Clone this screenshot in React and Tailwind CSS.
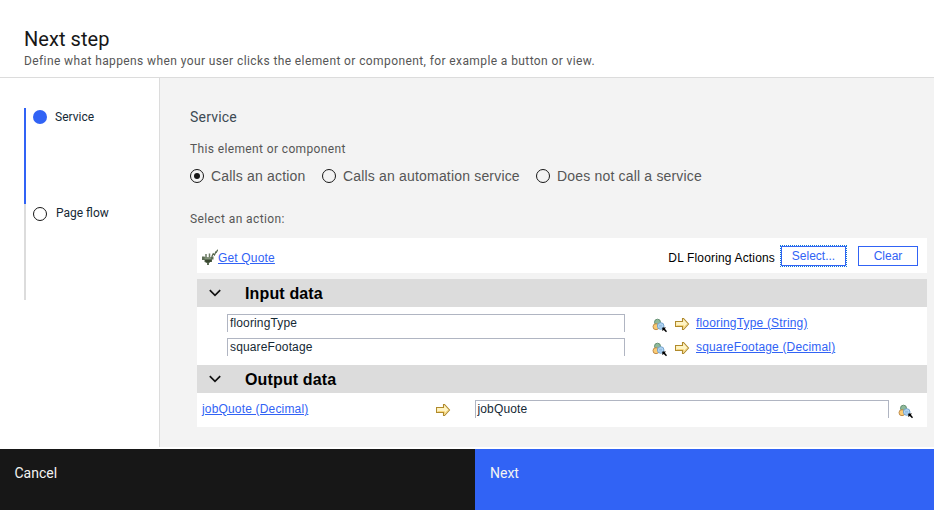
const plex = "font-['Roboto','Noto_Sans',sans-serif]";

function Radio({ checked, label, className }) {
  return (
    <label className={`flex items-center whitespace-nowrap ${className}`}>
      <span className="flex h-[14px] w-[14px] items-center justify-center rounded-full border border-[#171717]">
        {checked && <span className="h-[6px] w-[6px] rounded-full bg-[#171717]" />}
      </span>
      <span className="ml-[7px] text-[14px] leading-5 text-[#565656]">{label}</span>
    </label>
  );
}

function PickIcon({ className }) {
  return (
    <svg className={`shrink-0 ${className}`} width="15" height="17" viewBox="0 0 15 17">
      <circle cx="5.5" cy="5.2" r="3" fill="#8fb99b" stroke="#5c8a6b" strokeWidth="0.9" />
      <circle cx="4" cy="9.7" r="3" fill="#fbcb74" stroke="#b98543" strokeWidth="0.9" />
      <circle cx="8.700" cy="9" r="3.300" fill="#b4d8f5" stroke="#6d9dc8" strokeWidth="0.9" />
      <path d="M7 8.300h3.200M7 9.900h3" stroke="#7fabd2" strokeWidth="0.7" />
      <path d="M10.300 10.500h3.700l-1.100 1.200 2.100 2.500-1 1.100-2.200-2.400-1.500 1.200z" fill="#000" />
    </svg>
  );
}

function Arrow({ className }) {
  return (
    <svg className={`shrink-0 ${className}`} width="15" height="12" viewBox="0 0 15 12">
      <path d="M.5 3.500h7V.5h1L13.500 6l-5 5.500h-1v-3H.5z" fill="#fff4c4" stroke="#b08a2c" strokeWidth="1.100" />
      <path d="M1.500 7.500h7v2.500l3.200-3.700" fill="none" stroke="#f6d67f" />
    </svg>
  );
}

function Plug() {
  return (
    <svg className="shrink-0" width="16" height="17" viewBox="0 0 16 17">
      <path d="M4 5v4M7.500 4.500v4" stroke="#6b7a63" strokeWidth="1.500" />
      <path d="M0 7.500h2.500l.5.800h5.500l1.500-.8h1.500v3h-1.500V13H8l-1 1v2H5v-2L2.500 13v-2H0z" fill="#5d6d55" />
      <path d="M3 11h6.500v1L7.500 13.500h-3L3 12z" fill="#39472f" />
      <path d="M2.500 9.200h6.500" stroke="#9aac90" strokeWidth="0.900" />
      <path d="M9.700 7.800l1.500-3 1.300 1.200 1.300-3 .5.400 1.400-2.700" fill="none" stroke="#55654d" strokeWidth="1.200" />
    </svg>
  );
}

function SectionBar({ title }) {
  return (
    <div className="flex h-7 items-center bg-[#dcdcdc] pl-3">
      <svg width="12" height="8" viewBox="0 0 12 8">
        <path d="M.8 1.200L6 6.400l5.200-5.200" fill="none" stroke="#111" strokeWidth="1.700" />
      </svg>
      <h2 className="ml-[24px] pt-px text-[16px] font-bold leading-7 tracking-[0.14px] text-black">{title}</h2>
    </div>
  );
}

function Field({ value, className }) {
  return (
    <div className={`h-[18px] shrink-0 border-x border-t border-[#b0b5c2] text-[12px] leading-[17px] tracking-[0.14px] text-[#152935] ${className}`}>
      {value}
    </div>
  );
}

function DataLink({ children, className }) {
  return (
    <a className={`text-[12px] leading-[18px] tracking-[0.17px] text-[#3163f5] underline underline-offset-[1px] ${className}`}>
      {children}
    </a>
  );
}

function InputRow({ name, type }) {
  return (
    <div className="flex h-6 items-start">
      <Field value={name} className="ml-[30px] w-[398px] pl-[2px]" />
      <PickIcon className="ml-[27px] mt-[3px]" />
      <Arrow className="ml-2 mt-[4px]" />
      <DataLink className="ml-[6px]">{`${name} (${type})`}</DataLink>
    </div>
  );
}

export default function App() {
  return (
    <div className="flex h-[510px] w-[934px] flex-col overflow-hidden bg-white font-['Liberation_Sans',Arial,sans-serif]">
      <header className={`h-[78px] border-b border-[#dcdcdc] pl-6 pt-[26px] ${plex}`}>
        <h1 className="text-[20px] leading-[26px] tracking-[0.05px] text-[#171717]">Next step</h1>
        <p className="text-[12px] leading-[18px] tracking-[0.398px] text-[#565656]">
          Define what happens when your user clicks the element or component, for example a button or view.
        </p>
      </header>

      <div className="mb-[2px] flex h-[369px]">
        <nav className={`w-[160px] border-r border-[#dcdcdc] pl-6 pt-[30px] text-[12px] leading-[18px] text-[#152935] ${plex}`}>
          <div className="flex h-24 items-start border-l-2 border-[#3163f5] pl-[7px]">
            <span className="mt-[2px] h-[14px] w-[14px] rounded-full bg-[#3163f5]" />
            <span className="ml-2">Service</span>
          </div>
          <div className="flex h-24 items-start border-l-2 border-[#dcdcdc] pl-[7px]">
            <span className="mt-[3px] h-[14px] w-[14px] rounded-full border border-[#171717]" />
            <span className="ml-[9px]">Page flow</span>
          </div>
        </nav>

        <main className="flex-1 bg-[#f3f3f3] pl-[30px] pt-[29px]">
          <h2 className={`text-[14px] leading-5 tracking-[0.2px] text-[#3d4a53] ${plex}`}>Service</h2>
          <p className={`mt-3 text-[12px] leading-5 tracking-[0.37px] text-[#565656] ${plex}`}>This element or component</p>
          <div className="mt-[7px] flex h-5 items-center">
            <Radio checked label="Calls an action" className="w-[132px] tracking-[0.18px]" />
            <Radio label="Calls an automation service" className="w-[214px] tracking-[0.18px]" />
            <Radio label="Does not call a service" className="tracking-[0.18px]" />
          </div>
          <p className={`mt-[23px] text-[12px] leading-5 tracking-[0.4px] text-[#565656] ${plex}`}>Select an action:</p>

          <div className="ml-[7px] mt-[9px] w-[730px]">
            <div className="flex h-[35px] items-start bg-white pl-[5px] pt-2">
              <div className="flex pt-[3px]">
                <Plug />
                <DataLink>Get Quote</DataLink>
              </div>
              <span className="ml-auto mr-[6px] mt-[3px] text-[12px] leading-[18px] tracking-[0.16px] text-black">DL Flooring Actions</span>
              <button className="h-5 w-[65px] border border-[#3163f5] text-[12px] leading-[18px] text-[#3163f5] outline-1 outline-dotted outline-[#1478d4]">
                Select...
              </button>
              <button className="ml-3 mr-[9px] h-5 w-[60px] border border-[#3163f5] text-[12px] leading-[18px] text-[#3163f5]">
                Clear
              </button>
            </div>

            <div className="mt-[6px] bg-white">
              <SectionBar title="Input data" />
              <div className="h-[58px] pt-[7px]">
                <InputRow name="flooringType" type="String" />
                <InputRow name="squareFootage" type="Decimal" />
              </div>
              <SectionBar title="Output data" />
              <div className="flex h-[34px] items-start pl-[5px] pt-[7px]">
                <DataLink className="w-[234px]">jobQuote (Decimal)</DataLink>
                <Arrow className="mt-[4px]" />
                <Field value="jobQuote" className="ml-6 w-[414px] pl-[1.5px]" />
                <PickIcon className="ml-[9px] mt-[3px]" />
              </div>
            </div>
          </div>
        </main>
      </div>

      <footer className={`flex h-[61px] text-[14px] leading-5 ${plex}`}>
        <button className="flex w-[475px] items-start bg-[#171717] pl-[14.5px] pt-[14px] text-[#f3f3f3]">Cancel</button>
        <button className="flex flex-1 items-start bg-[#3163f5] pl-[15px] pt-[14px] text-[#f3f3f3]">Next</button>
      </footer>
    </div>
  );
}
